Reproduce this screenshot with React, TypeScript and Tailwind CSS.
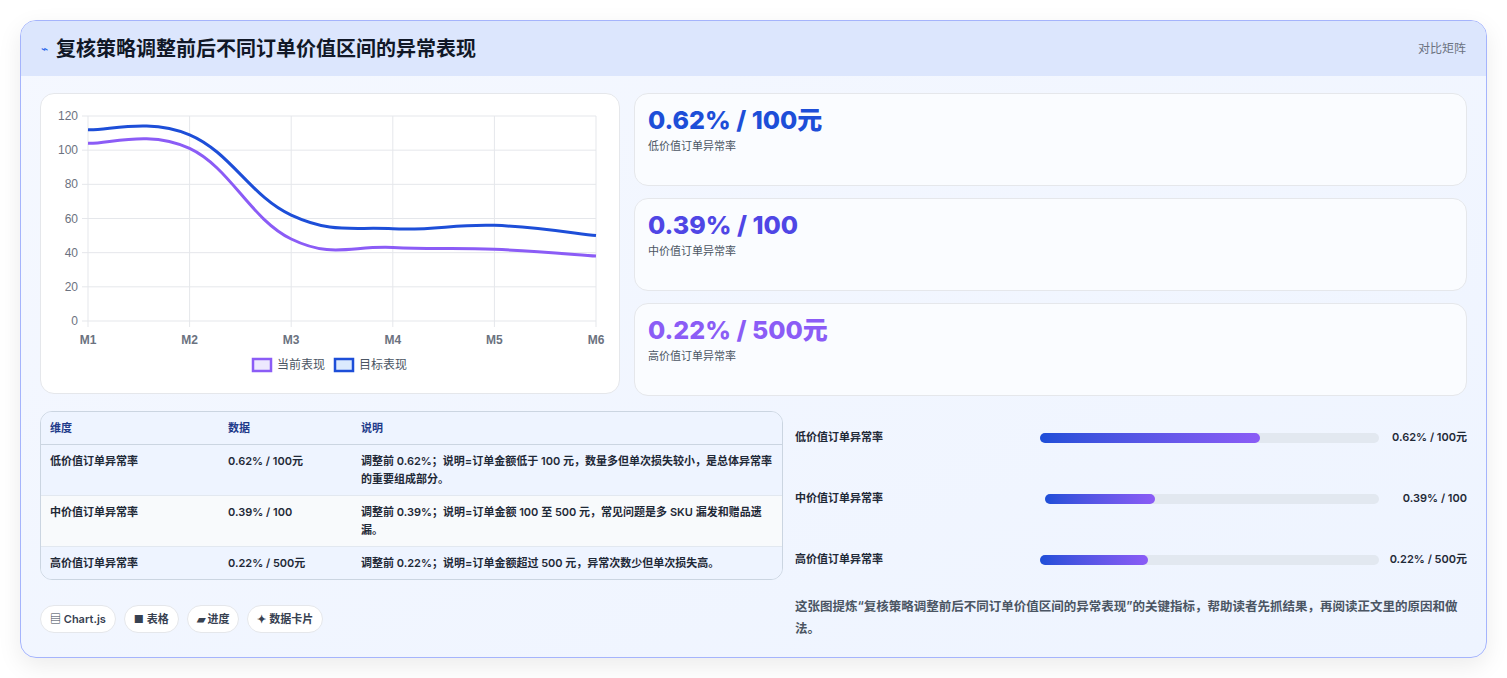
import React from "react";

const W = 580, H = 300;
const x0 = 47, x1 = 555, yTop = 22, yBot = 227;
const X = (i: number) => x0 + (i * (x1 - x0)) / 5;
const Y = (v: number) => yBot - (v * (yBot - yTop)) / 120;
function path(vals: number[]) {
  const p = vals.map((v, i) => [X(i), Y(v)]);
  let d = `M${p[0][0]},${p[0][1]}`;
  for (let i = 0; i < p.length - 1; i++) {
    const p0 = p[i - 1] || p[i], p1 = p[i], p2 = p[i + 1], p3 = p[i + 2] || p2;
    const t = 0.2;
    d += ` C${p1[0] + (p2[0] - p0[0]) * t},${p1[1] + (p2[1] - p0[1]) * t} ${p2[0] - (p3[0] - p1[0]) * t},${p2[1] - (p3[1] - p1[1]) * t} ${p2[0]},${p2[1]}`;
  }
  return d;
}

function Chart() {
  return (
    <svg width={W} height={H} viewBox={`0 0 ${W} ${H}`} style={{ fontFamily: "Liberation Sans, Arial, sans-serif" }}>
      {[0, 20, 40, 60, 80, 100, 120].map((v) => (
        <g key={v}>
          <line x1={x0 - 6} x2={x1} y1={Y(v)} y2={Y(v)} stroke="#e5e7eb" />
          <text x={x0 - 10} y={Y(v) + 4} textAnchor="end" fontSize="12" fill="#6b7280">{v}</text>
        </g>
      ))}
      {[0, 1, 2, 3, 4, 5].map((i) => (
        <g key={i}>
          <line x1={X(i)} x2={X(i)} y1={yTop} y2={yBot + 6} stroke="#e5e7eb" />
          <text x={X(i)} y={yBot + 23} textAnchor="middle" fontSize="12" fontWeight="bold" fill="#6b7280">M{i + 1}</text>
        </g>
      ))}
      <path d={path([104, 101, 48, 43, 42, 38])} fill="none" stroke="#8b5cf6" strokeWidth="3" />
      <path d={path([112, 109, 62, 54, 56, 50])} fill="none" stroke="#1d4ed8" strokeWidth="3" />
      <rect x="212" y="265" width="18" height="12" fill="#ede9fe" stroke="#8b5cf6" strokeWidth="2.5" />
      <text x="236" y="275" fontSize="12" fill="#4b5563" fontFamily="Noto Sans CJK SC, sans-serif">当前表现</text>
      <rect x="294" y="265" width="18" height="12" fill="#dbeafe" stroke="#1d4ed8" strokeWidth="2.5" />
      <text x="318" y="275" fontSize="12" fill="#4b5563" fontFamily="Noto Sans CJK SC, sans-serif">目标表现</text>
    </svg>
  );
}

const stats = [
  ["0.62% / 100元", "低价值订单异常率", "text-[#1d4ed8]"],
  ["0.39% / 100", "中价值订单异常率", "text-[#4f46e5]"],
  ["0.22% / 500元", "高价值订单异常率", "text-[#8b5cf6]"],
];
const rows = [
  ["低价值订单异常率", "0.62% / 100元", "调整前 0.62%；说明=订单金额低于 100 元，数量多但单次损失较小，是总体异常率的重要组成部分。"],
  ["中价值订单异常率", "0.39% / 100", "调整前 0.39%；说明=订单金额 100 至 500 元，常见问题是多 SKU 漏发和赠品遗漏。"],
  ["高价值订单异常率", "0.22% / 500元", "调整前 0.22%；说明=订单金额超过 500 元，异常次数少但单次损失高。"],
];
const bars = [
  ["低价值订单异常率", 65, "0.62% / 100元"],
  ["中价值订单异常率", 33, "0.39% / 100"],
  ["高价值订单异常率", 32, "0.22% / 500元"],
] as const;

export default function App() {
  return (
    <div className="w-[1507px] h-[678px] bg-white p-[20px]" style={{ fontFamily: "Inter, 'Noto Sans CJK SC', sans-serif" }}>
      <div className="w-[1467px] h-[638px] rounded-[16px] border border-[#a5b4fc] bg-gradient-to-br from-[#f5f8ff] to-[#eef4ff] shadow-[0_8px_24px_rgba(0,0,0,0.08)] overflow-hidden">
        <div className="h-[55px] bg-[#dce6fd] flex items-center justify-between px-[20px]">
          <div className="flex items-center gap-[8px]">
            <span className="text-[#2563eb] text-[12px]">⌁</span>
            <span className="text-[20px] font-bold text-[#111827]">复核策略调整前后不同订单价值区间的异常表现</span>
          </div>
          <span className="text-[12px] text-[#6b7280]">对比矩阵</span>
        </div>
        <div className="px-[19px] pt-[17px] flex gap-[14px]">
          <div className="w-[580px] h-[301px] bg-white rounded-[14px] border border-[#e5e7eb] overflow-hidden">
            <Chart />
          </div>
          <div className="flex-1 flex flex-col gap-[12px]">
            {stats.map(([v, l, c]) => (
              <div key={l} className="h-[93px] rounded-[14px] border border-[#e5e7eb] bg-[#fafcff] px-[13px] pt-[10px]">
                <div className={`text-[25px] font-extrabold leading-[32px] ${c}`}>{v}</div>
                <div className="text-[11px] text-[#4b5563] mt-[2px]">{l}</div>
              </div>
            ))}
          </div>
        </div>
        <div className="px-[19px] pt-[15px] flex gap-[12px]">
          <div className="w-[743px]">
            <div className="rounded-[12px] border border-[#cbd5e1] overflow-hidden text-[11px]">
              <div className="grid grid-cols-[178px_133px_1fr] bg-[#eef4ff] h-[33px] items-center px-[9px] text-[#1e3a8a] font-semibold border-b border-[#cbd5e1]">
                <span>维度</span><span>数据</span><span>说明</span>
              </div>
              {rows.map((r, i) => (
                <div key={i} className={`grid grid-cols-[178px_133px_1fr] px-[9px] py-[7px] text-[#1f2937] font-semibold leading-[18px] ${i % 2 === 1 ? "bg-[#f8fafc]" : "bg-[#eef4ff]"} ${i < 2 ? "border-b border-[#e2e8f0]" : ""}`}>
                  <span>{r[0]}</span><span>{r[1]}</span><span>{r[2]}</span>
                </div>
              ))}
            </div>
            <div className="flex gap-[8px] mt-[25px] text-[11px] font-semibold text-[#374151]">
              {["▤ Chart.js", "■ 表格", "▰ 进度", "✦ 数据卡片"].map((t) => (
                <span key={t} className="px-[9px] h-[28px] flex items-center rounded-full bg-white border border-[#e5e7eb]">{t}</span>
              ))}
            </div>
          </div>
          <div className="flex-1 -mt-[4px]">
            {bars.map(([l, p, v], i) => (
              <div key={l} className="h-[61px] flex items-center text-[11px] font-semibold text-[#1f2937]">
                <span className="w-[245px]">{l}</span>
                <div className={`flex-1 h-[10px] rounded-full bg-[#e2e8f0] ${i === 1 ? "ml-[5px]" : ""}`}>
                  <div className="h-full rounded-full bg-gradient-to-r from-[#1d4ed8] to-[#8b5cf6]" style={{ width: `${p}%` }} />
                </div>
                <span className="ml-[8px] w-[80px] text-right">{v}</span>
              </div>
            ))}
            <p className="mt-[6px] text-[12.5px] leading-[22px] font-semibold text-[#4b5563]">这张图提炼“复核策略调整前后不同订单价值区间的异常表现”的关键指标，帮助读者先抓结果，再阅读正文里的原因和做法。</p>
          </div>
        </div>
      </div>
    </div>
  );
}
